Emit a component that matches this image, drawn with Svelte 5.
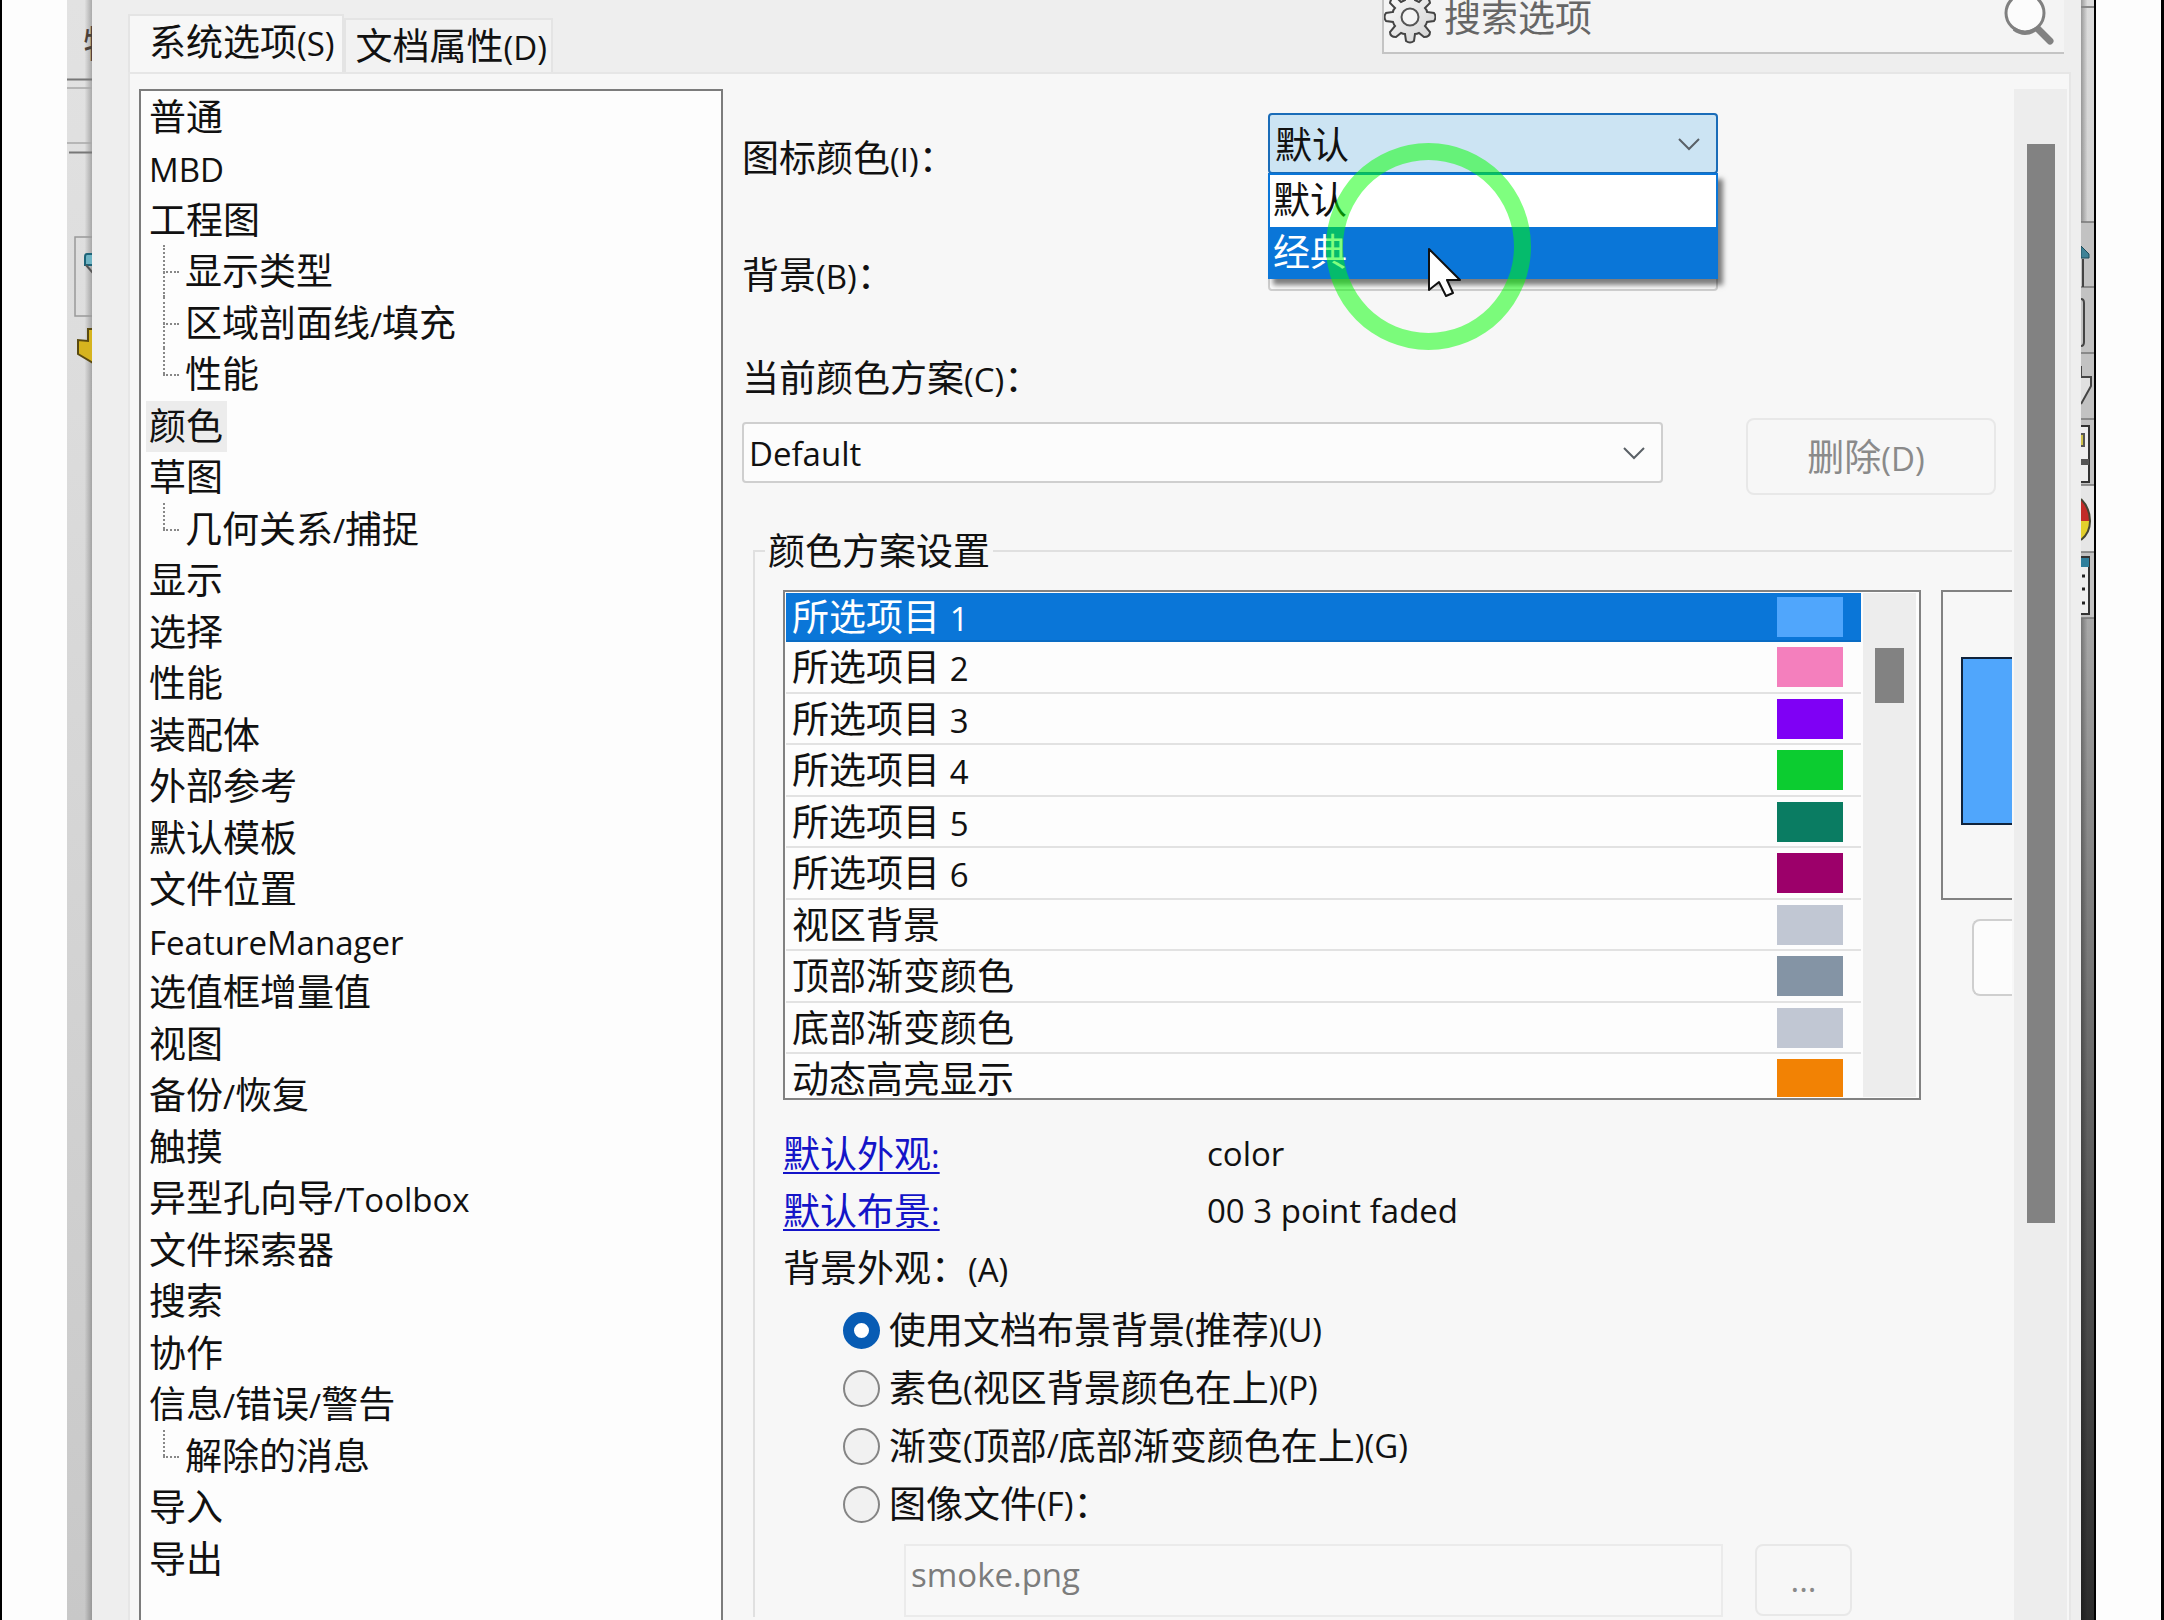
<script lang="ts">
	let categories = [
		{ name: '普通' },
		{ name: 'MBD' },
		{ name: '工程图' },
		{ name: '显示类型', sub: true },
		{ name: '区域剖面线/填充', sub: true },
		{ name: '性能', sub: true, last: true },
		{ name: '颜色' },
		{ name: '草图' },
		{ name: '几何关系/捕捉', sub: true, last: true },
		{ name: '显示' },
		{ name: '选择' },
		{ name: '性能' },
		{ name: '装配体' },
		{ name: '外部参考' },
		{ name: '默认模板' },
		{ name: '文件位置' },
		{ name: 'FeatureManager' },
		{ name: '选值框增量值' },
		{ name: '视图' },
		{ name: '备份/恢复' },
		{ name: '触摸' },
		{ name: '异型孔向导/Toolbox' },
		{ name: '文件探索器' },
		{ name: '搜索' },
		{ name: '协作' },
		{ name: '信息/错误/警告' },
		{ name: '解除的消息', sub: true, last: true },
		{ name: '导入' },
		{ name: '导出' }
	];
	let category = $state(6);

	let colors = [
		{ name: '所选项目 1', value: '#50a6fc' },
		{ name: '所选项目 2', value: '#f47fbd' },
		{ name: '所选项目 3', value: '#7f00f5' },
		{ name: '所选项目 4', value: '#0ccc30' },
		{ name: '所选项目 5', value: '#0a7c62' },
		{ name: '所选项目 6', value: '#9c006a' },
		{ name: '视区背景', value: '#c1c7d3' },
		{ name: '顶部渐变颜色', value: '#8494a5' },
		{ name: '底部渐变颜色', value: '#c1c7d3' },
		{ name: '动态高亮显示', value: '#f28204' }
	];
	let color = $state(0);

	let iconColors = ['默认', '经典'];
	let hovered = $state(1);

	let backgrounds = [
		{ id: 'scene', name: '使用文档布景背景(推荐)(U)' },
		{ id: 'plain', name: '素色(视区背景颜色在上)(P)' },
		{ id: 'gradient', name: '渐变(顶部/底部渐变颜色在上)(G)' },
		{ id: 'image', name: '图像文件(F)：' }
	];
	let background = $state('scene');

	// latin runs are set a little smaller than the chinese ones
	function split(text: string) {
		return text.split(/([\x21-\x7e]+)/).filter((t) => t !== '');
	}
	function isLatin(text: string) {
		return /^[\x21-\x7e]/.test(text);
	}
</script>

{#snippet label(text: string)}{#each split(text) as part}{#if isLatin(part)}<span class="latin">{part}</span>{:else}{part}{/if}{/each}{/snippet}

{#snippet chevron()}
	<svg class="chevron" width="22" height="14" viewBox="0 0 22 14" aria-hidden="true">
		<path d="M1 2 11 12 21 2" fill="none" stroke="#5a6066" stroke-width="2" />
	</svg>
{/snippet}

<div class="screen">
	<div class="margin left"></div>
	<div class="strip appLeft">
		<svg width="25" height="380" viewBox="0 0 25 380" aria-hidden="true">
			<path d="M0 79.500H25M2 152.500H25" stroke="#777" stroke-width="2" />
			<path d="M0 88H25M0 143H25" stroke="#a8a8a8" stroke-width="1.500" />
			<path d="M25 237H8V316H25" fill="none" stroke="#999" stroke-width="1.500" />
			<path d="M25 254H20Q18 254 18 257V265H25" fill="#6fb4c4" stroke="#1d6478" stroke-width="2" />
			<path d="M19 265 26 273" stroke="#555" stroke-width="2" />
			<path d="M26 329H21V341L11 340V354L26 363Z" fill="#d6b41e" stroke="#5a4a10" stroke-width="2" />
		</svg>
		<span class="cut">特</span>
	</div>

	<main class="dialog">
		<header>
			<div class="tabs" role="tablist">
				<button class="tab active" role="tab" aria-selected="true">{@render label('系统选项(S)')}</button>
				<button class="tab" role="tab" aria-selected="false">{@render label('文档属性(D)')}</button>
			</div>
			<div class="search">
				<svg class="gear" width="52" height="44" viewBox="-26 -17 52 44" aria-hidden="true">
					<defs>
						<linearGradient id="gearFill" x1="0" y1="0" x2="1" y2="1">
							<stop offset="0" stop-color="#fff" />
							<stop offset="1" stop-color="#d0d0d0" />
						</linearGradient>
					</defs>
					<path
						d="M-5-17-4-24Q0-27 4-24L5-17Q7-16 9-15L14-20Q19-20 20-14L15-9Q17-7 17-5L24-4Q27 0 24 4L17 5Q16 8 15 9L20 15Q20 20 14 20L9 16Q7 17 5 17L4 24Q0 27-4 24L-5 17Q-7 17-9 16L-14 20Q-20 20-20 15L-15 9Q-16 8-17 5L-24 4Q-27 0-24-4L-17-5Q-17-7-15-9L-20-14Q-19-20-14-20L-9-15Q-7-16-5-17Z"
						fill="url(#gearFill)"
						stroke="#444"
						stroke-width="2"
					/>
					<circle r="8.500" fill="#f4f4f4" stroke="#555" stroke-width="2" />
				</svg>
				<input type="search" placeholder="搜索选项" aria-label="搜索选项" />
				<svg width="60" height="46" viewBox="0 0 60 46" aria-hidden="true">
					<path d="M33 28 46 41" stroke="#828282" stroke-width="7" stroke-linecap="round" />
					<circle cx="21" cy="13" r="19" fill="#fcfcfc" stroke="#808080" stroke-width="3" />
					<path d="M10 29Q21 37 32 29" fill="none" stroke="#808080" stroke-width="4" />
				</svg>
			</div>
		</header>

		<div class="page">
			<ul class="tree">
				{#each categories as item, i}
					<li class:sub={item.sub} class:last={item.last}>
						<button class:selected={category === i} onclick={() => (category = i)}>{@render label(item.name)}</button>
					</li>
				{/each}
			</ul>

			<div class="content">
				<div class="form">
					<label for="iconColor">{@render label('图标颜色(I)：')}</label>
					<div class="combo">
						<select id="iconColor" class="open">
							{#each iconColors as name}
								<option>{name}</option>
							{/each}
						</select>
						{@render chevron()}
						<ul class="popup" role="listbox" aria-label="图标颜色">
							{#each iconColors as name, i}
								<li
									role="option"
									aria-selected={hovered === i}
									class:hovered={hovered === i}
									onmouseenter={() => (hovered = i)}
								>
									{name}
								</li>
							{/each}
						</ul>
						<div class="ring"></div>
						<svg class="cursor" width="36" height="52" viewBox="0 0 36 52" aria-hidden="true">
							<path
								d="M2 2V43L12 35 19 49 26 46 20 33H33Z"
								fill="#fff"
								stroke="#111"
								stroke-width="2"
								stroke-linejoin="round"
							/>
						</svg>
					</div>
					<label for="brightness">{@render label('背景(B)：')}</label>
					<div class="combo">
						<select id="brightness"><option></option></select>
					</div>
				</div>

				<label class="schemeLabel" for="scheme">{@render label('当前颜色方案(C)：')}</label>
				<div class="scheme">
					<div class="combo">
						<select id="scheme" class="latin"><option>Default</option></select>
						{@render chevron()}
					</div>
					<button class="btn delete" disabled>{@render label('删除(D)')}</button>
				</div>

				<fieldset>
					<legend>颜色方案设置</legend>
					<div class="settings">
						<div class="listbox">
							<ul role="listbox" aria-label="颜色方案设置">
								{#each colors as item, i}
									<!-- svelte-ignore a11y_click_events_have_key_events -->
									<li
										role="option"
										tabindex="-1"
										aria-selected={color === i}
										class:selected={color === i}
										onclick={() => (color = i)}
									>
										<span>{@render label(item.name)}</span>
										<i style="background: {item.value}"></i>
									</li>
								{/each}
							</ul>
							<div class="bar"><div class="thumb"></div></div>
						</div>
						<div class="side">
							<div class="preview">
								<div style="background: {colors[color].value}"></div>
							</div>
							<button class="edit" aria-label="编辑"></button>
						</div>
					</div>

					<div class="links">
						<a href="#appearance">{@render label('默认外观:')}</a>
						<span class="latin">color</span>
						<a href="#scene">{@render label('默认布景:')}</a>
						<span class="latin">00 3 point faded</span>
						<span>{@render label('背景外观：(A)')}</span>
					</div>

					<div class="radios">
						{#each backgrounds as item}
							<label>
								<input type="radio" name="background" value={item.id} bind:group={background} />
								{@render label(item.name)}
							</label>
						{/each}
					</div>

					<div class="file">
						<input class="latin" type="text" value="smoke.png" aria-label="图像文件" disabled />
						<button class="btn latin" disabled>...</button>
					</div>
				</fieldset>
			</div>

			<div class="scrollbar"><div class="thumb"></div></div>
		</div>
	</main>

	<div class="strip appRight">
		<svg width="14" height="626" viewBox="0 0 14 626" aria-hidden="true">
			<rect y="222" width="14" height="396" fill="#c2c2c2" />
			<rect y="485" width="14" height="67" fill="#e6e6e6" />
			<path d="M0 7H14" stroke="#888" stroke-width="2" />
			<path d="M0 222H14M0 287H14M0 353H14M0 419H14M0 485H14M0 552H14M0 618H14" stroke="#777" stroke-width="1.500" />
			<path d="M0 246 8 254V258H0Z" fill="#3d8296" stroke="#1d4c5a" />
			<path d="M2 259V287" stroke="#444" stroke-width="2" />
			<path d="M0 299Q3 299 3 303V342Q3 346 0 346" fill="none" stroke="#444" stroke-width="2" />
			<path d="M0 366V377H10V386L0 404" fill="#e0e0e0" stroke="#444" stroke-width="2" />
			<path d="M0 426H8V482H0" fill="#eee" stroke="#333" stroke-width="2" />
			<rect x="-4" y="434" width="7" height="12" fill="#cfc04a" stroke="#555" stroke-width="2" />
			<path d="M0 462H8" stroke="#555" stroke-width="6" />
			<path d="M0 499Q9 508 9 521H0Z" fill="#c22c28" />
			<path d="M9 521Q9 533 0 540V521Z" fill="#e3cf2c" />
			<path d="M0 499Q9 508 9 521Q9 533 0 540" fill="none" stroke="#443" stroke-width="2" />
			<path d="M0 557H8V614H0" fill="#eee" stroke="#333" stroke-width="2" />
			<rect y="558" width="8" height="9" fill="#2f7f9c" />
			<path d="M1 576H4M1 589H4M1 603H4" stroke="#222" stroke-width="3" />
		</svg>
	</div>
	<div class="margin right"></div>
</div>

<style>
	:global(body) {
		margin: 0;
		background: #fdfdfd;
	}

	.screen {
		display: flex;
		height: 100vh;
		overflow: hidden;
		font-family: 'Open Sans', 'Noto Sans CJK SC', sans-serif;
		font-size: 37px;
		line-height: 52px;
		color: #111;
	}

	.screen * {
		box-sizing: border-box;
	}

	ul {
		list-style: none;
		margin: 0;
		padding: 0;
	}

	button,
	input,
	select {
		font: inherit;
		color: inherit;
		margin: 0;
	}

	svg {
		display: block;
		flex: none;
	}

	.latin {
		font-size: 33px;
	}

	span.latin {
		line-height: 1;
	}

	/* BACKGROUND WINDOW */
	.margin {
		flex: none;
		background: #fdfdfd;
	}

	.left {
		width: 67px;
		border-left: 2px solid #000;
	}

	.right {
		width: 70px;
		border-left: 2px solid #000;
		border-right: 3px solid #000;
	}

	.strip {
		position: relative;
		flex: none;
		overflow: hidden;
	}

	.appLeft {
		width: 25px;
		background: linear-gradient(to right, transparent 70%, rgba(0, 0, 0, 0.25)),
			linear-gradient(#e2e2e2, #dcdcdc 25%, #c8c8c8);
	}

	.cut {
		position: absolute;
		left: 16px;
		top: 18px;
		color: #4a4038;
	}

	.appRight {
		width: 13px;
		background: linear-gradient(to right, rgba(0, 0, 0, 0.3), transparent 50%),
			linear-gradient(#dcdcdc, #cfcfcf 18%, #a8a8a8 38%, #8c8c8c 50%, #555 75%, #2c2c2c);
	}

	/* DIALOG */
	.dialog {
		flex: 1;
		min-width: 0;
		display: flex;
		flex-direction: column;
		background: #eee;
	}

	header {
		flex: none;
		display: flex;
		justify-content: space-between;
		height: 72px;
		padding: 0 17px 0 36px;
	}

	.tabs {
		display: flex;
		align-items: flex-end;
	}

	.tab {
		height: 54px;
		padding: 0 4px 0 10px;
		border: 2px solid #e4e4e4;
		border-bottom: none;
		background: #f2f2f2;
		white-space: nowrap;
	}

	.tab.active {
		height: 58px;
		padding: 0 7px 4px 19px;
		background: #f7f7f7;
	}

	.search {
		display: flex;
		width: 682px;
		height: 54px;
		border: 2px solid #c4c4c4;
		border-top: none;
		border-right: none;
		background: #f4f4f4;
	}

	.search input {
		flex: 1;
		min-width: 0;
		height: 36px;
		padding: 0 8px;
		border: none;
		outline: none;
		background: transparent;
	}

	.search input::placeholder {
		color: #666;
		opacity: 1;
	}

	.page {
		flex: 1;
		min-height: 0;
		display: flex;
		margin: 0 10px 0 36px;
		padding: 15px 2px 0 9px;
		border: 2px solid #e6e6e6;
		border-bottom: none;
		background: #f7f7f7;
	}

	.tree {
		flex: none;
		width: 584px;
		padding-left: 5px;
		border: 2px solid #7c7c7c;
		border-bottom: none;
		background: #fdfdfd;
	}

	.tree li {
		position: relative;
		height: 51px;
	}

	.tree li:nth-child(even) {
		height: 52px;
	}

	.tree button {
		height: 51px;
		padding: 0 4px 0 3px;
		border: none;
		background: transparent;
		line-height: 50px;
		white-space: nowrap;
	}

	.tree .selected {
		background: #ececec;
	}

	.tree .sub {
		padding-left: 36px;
	}

	.sub::before {
		content: '';
		position: absolute;
		left: 17px;
		top: 0;
		height: 100%;
		border-left: 2px dotted #888;
	}

	.sub.last::before {
		height: 50%;
	}

	.sub::after {
		content: '';
		position: absolute;
		left: 17px;
		top: 50%;
		width: 16px;
		border-top: 2px dotted #888;
	}

	.content {
		flex: 1;
		min-width: 0;
		overflow: hidden;
		padding: 24px 0 0 19px;
	}

	.form {
		display: grid;
		grid-template-columns: 526px 450px;
		row-gap: 46px;
		align-items: start;
	}

	.form > label {
		padding-top: 19px;
	}

	.combo {
		position: relative;
		height: 61px;
	}

	select {
		display: block;
		appearance: none;
		width: 100%;
		height: 61px;
		padding: 2px 5px 0;
		border: 2px solid #cfcfcf;
		border-radius: 4px;
		background: #fcfcfc;
		outline: none;
	}

	select.open {
		border-color: #1a6cb8;
		background: #cce4f3;
	}

	.chevron {
		position: absolute;
		right: 18px;
		top: 24px;
		pointer-events: none;
	}

	.popup {
		position: absolute;
		z-index: 1;
		left: 0;
		top: 60px;
		width: 100%;
		border: 2px solid #0a76d8;
		border-bottom: none;
		background: #fff;
		box-shadow: 5px 6px 5px rgba(0, 0, 0, 0.5);
	}

	.popup li {
		height: 52px;
		padding: 0 3px;
		line-height: 50px;
	}

	.popup .hovered {
		background: #0a76d8;
		color: #fff;
	}

	.ring {
		position: absolute;
		z-index: 2;
		left: 58px;
		top: 30px;
		width: 205px;
		height: 207px;
		border: 17px solid rgba(0, 255, 0, 0.5);
		border-radius: 50%;
		pointer-events: none;
	}

	.cursor {
		position: absolute;
		z-index: 3;
		left: 159px;
		top: 134px;
		pointer-events: none;
	}

	.schemeLabel {
		display: block;
		margin-top: 51px;
	}

	.scheme {
		display: flex;
		gap: 83px;
		margin: 14px 16px 30px 0;
	}

	.scheme .combo {
		flex: 1;
		margin-top: 4px;
	}

	.btn {
		border: 2px solid #e8e8e8;
		border-radius: 8px;
		background: #f7f7f7;
		color: #8a8a8a;
	}

	.delete {
		width: 250px;
		height: 77px;
		padding: 0 16px 0 6px;
	}

	/* COLOR SCHEME */
	fieldset {
		min-width: 0;
		margin: 0 0 0 11px;
		padding: 13px 0 0 28px;
		border: 2px solid #e0e0e0;
		border-right: none;
		border-bottom: none;
	}

	legend {
		margin-left: -18px;
		padding: 0 3px;
	}

	.settings {
		display: flex;
		gap: 20px;
	}

	.listbox {
		flex: 1;
		display: flex;
		height: 510px;
		padding: 1px 3px 1px 1px;
		border: 2px solid #828282;
		background: #fdfdfd;
		overflow: hidden;
	}

	.listbox ul {
		flex: 1;
		overflow: hidden;
	}

	.listbox li {
		display: flex;
		justify-content: space-between;
		align-items: center;
		height: 52px;
		padding: 0 18px 0 6px;
		border-bottom: 2px solid #e2e2e2;
	}

	.listbox li:nth-child(odd) {
		height: 51px;
	}

	.listbox li:first-child {
		height: 49px;
	}

	.listbox li.selected {
		border-color: #0a6cc4;
		background: #0a76d8;
		color: #fff;
	}

	.listbox i {
		width: 66px;
		height: 40px;
	}

	.bar {
		width: 53px;
		margin-left: 2px;
		padding: 55px 12px 0;
		background: #ededed;
	}

	.bar .thumb {
		height: 55px;
	}

	.thumb {
		background: #828282;
	}

	.side {
		width: 71px;
	}

	.preview {
		height: 310px;
		padding: 65px 0 0 18px;
		border: 2px solid #828282;
		border-right: none;
	}

	.preview div {
		height: 168px;
		border: 2px solid #10233c;
		border-right: none;
	}

	.edit {
		display: block;
		width: 40px;
		height: 77px;
		margin: 19px 0 0 31px;
		border: 2px solid #cfcfcf;
		border-right: none;
		border-radius: 8px 0 0 8px;
		background: #fcfcfc;
	}

	.links {
		display: grid;
		grid-template-columns: 424px auto;
		grid-auto-rows: 57px;
		align-items: center;
		margin-top: 25px;
	}

	.links a {
		justify-self: start;
		color: #1414c8;
		text-decoration-thickness: 2px;
		text-underline-offset: 4px;
	}

	.radios {
		display: flex;
		flex-direction: column;
		align-items: flex-start;
		margin: 5px 0 11px 60px;
	}

	.radios label {
		display: flex;
		align-items: center;
		height: 58px;
		white-space: pre;
	}

	.radios .latin {
		line-height: 52px;
	}

	.radios input {
		appearance: none;
		width: 37px;
		height: 37px;
		margin-right: 9px;
		border: 2px solid #858585;
		border-radius: 50%;
		background: #f1f1f1;
	}

	.radios input:checked {
		border: 11px solid #085cb4;
		background: #fff;
	}

	.file {
		display: flex;
		gap: 32px;
		margin: 0 160px 0 121px;
	}

	.file input {
		flex: 1;
		height: 73px;
		padding: 0 5px 12px;
		border: 2px solid #ebebeb;
		background: #f8f8f8;
		color: #7c7c7c;
	}

	.file button {
		width: 97px;
		height: 72px;
	}

	.scrollbar {
		flex: none;
		width: 53px;
		margin-left: 2px;
		padding: 55px 12px 0 13px;
		background: #ededed;
	}

	.scrollbar .thumb {
		height: 1079px;
	}
</style>
